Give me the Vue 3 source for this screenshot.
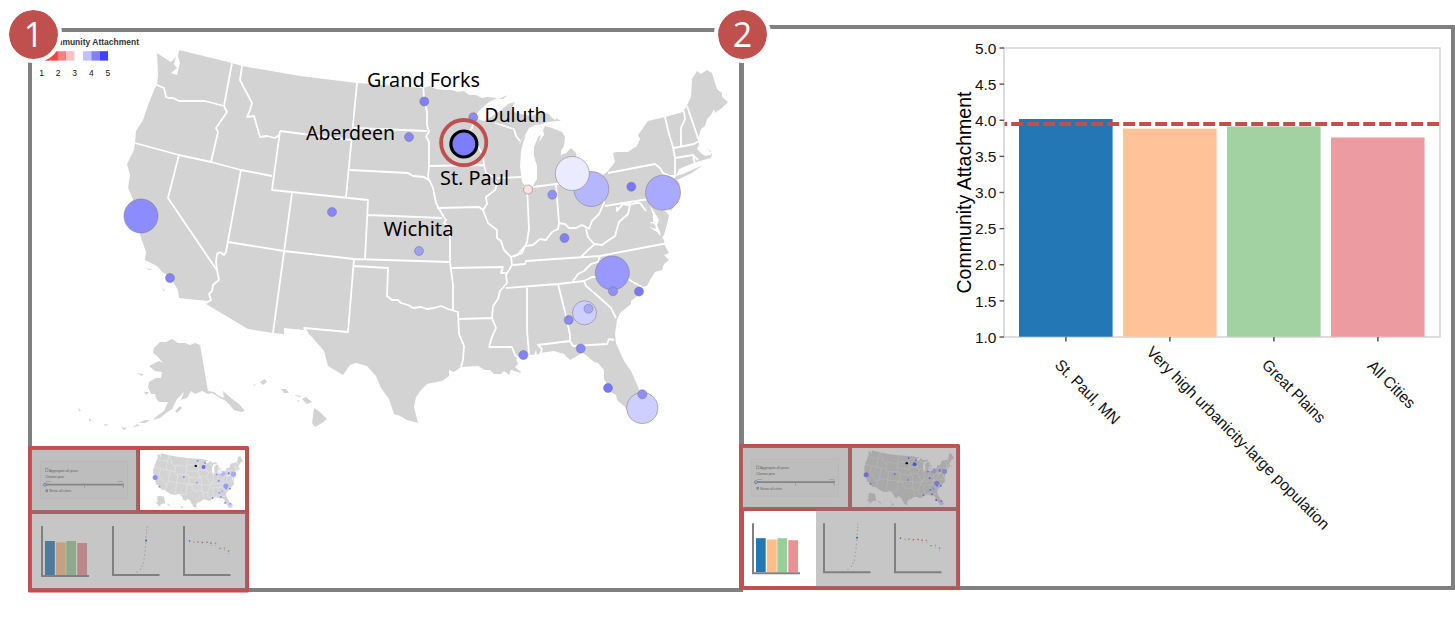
<script setup>
// Landmass outline in panel coordinates, clockwise from the Pacific Northwest.
const land = [
  'M157 53L163 57L171 62L176 57L174 64L177 68L171 73L177 75L180 63L178 56L179 50L232 63L242 66L300 76L357 83L423 88L430 86L436 89L445 90L452 90L458 92L464 91L469 95L476 95L482 98L487 97L497 98',
  'L489 102L480 110L473 118L484 121L491 117L500 111L508 104L515 102L511 109L514 112L525 115L532 116L540 112L549 114L551 117L557 121L548 122L542 124L535 125L529 128L525 135L520 142L519 145L523 138L526 135L523 143L521 151L520 166L522 182L525 187L532 187L537 179L537 166L534 156L534 147L538 137L541 135L539 142L544 135L543 130L545 126L552 128L562 132L565 137L564 146L561 151L561 155L566 153L571 148L576 153L577 163L581 171L588 174L596 180L608 171L615 162L613 153L616 152L628 152L637 146L640 139L638 135L648 121L665 117L683 112L686 107L691 97L692 79L697 71L701 74L707 70L712 73L717 89L722 93L722 97L728 102L722 108L719 110L715 113L714 109L711 115L707 119L705 126L701 129L698 139L699 145L697 149L702 154L705 156L711 155L711 151L708 149L712 154L711 158L700 161L691 164L679 169L676 176',
  'L683 174L703 165L692 173L677 180L680 184L679 190L675 205L671 211L667 208L664 204L665 211L669 215L667 224L664 235L661 239L660 232L657 225L659 220L655 213L650 206L653 215L653 222L649 222L655 225L656 229L649 227L657 232L664 240L665 246L669 253L664 255L669 260L664 264L662 270L655 272L650 280L647 286L641 287L637 296L631 301L631 304L620 313L617 320L616 327L615 334L616 343L619 350L624 361L631 371L636 382L641 394L646 408L644 416L637 417L627 411L625 407L617 400L616 395L609 391L607 384L604 379L604 370L598 363L594 362L586 355L582 353L570 360L564 354L554 351L540 353L537 355L536 350L534 355L525 354L516 359L518 364L515 367L522 373L514 371L511 370L509 375L504 371L501 374L494 374L490 370L485 370L478 366L461 367L454 372L449 370L449 376L442 381L427 384L421 390L416 397L414 407L418 423L407 420L400 416L394 414L389 399L381 388L376 376L367 366L356 363L350 365L343 375L328 366L324 351L312 337L304 330L284 328L284 334L273 333L248 329L206 304L208 301L179 298L178 290L170 277L162 272L157 266L145 260L146 252L139 232L131 215L133 199L128 188L130 175L127 164L134 150L135 143L136 131L143 120L148 105L155 88L157 85L158 75Z',
  'M154 348L160 342L166 342L172 339L178 343L185 343L190 345L195 343L200 345L208 391L214 392L219 396L224 398L223 391L231 398L239 404L245 411L241 412L234 410L226 401L220 398L212 393L208 394L202 391L195 394L191 391L187 398L181 400L184 392L177 399L172 409L166 413L160 418L153 420L157 416L164 411L168 402L159 402L156 398L155 394L151 394L148 387L149 382L156 378L161 378L162 372L155 371L149 366L159 361L163 363L157 356L153 353Z',
  'M175 411L180 406L182 408L177 413ZM144 392L149 392L146 395ZM137 373L143 374L142 376ZM139 423L145 420L150 420L145 423ZM132 427L138 424L139 426ZM121 427L127 428L124 430ZM112 427L117 428ZM104 424L109 425L105 426ZM89 418L92 421L89 421ZM78 407L81 411L79 411Z',
  'M260 382L265 379L267 382L263 385ZM253 385L256 384L254 386ZM281 389L286 389L289 393L284 393ZM294 395L302 396L299 397ZM302 399L306 397L312 402L307 404ZM297 400L300 401L298 402ZM314 408L320 412L327 419L322 423L315 427L312 423L313 416Z',
  'M146 268L150 269L153 270L149 270ZM162 288L165 291L163 291ZM499 99L508 95L503 99ZM556 118L561 121L556 121Z'
].join('')

// State boundaries, drawn as open strokes over the land.
const borders = [
  'M157 85L164 88L166 97L169 98L173 98L179 101L193 101L205 101L224 106M232 63L224 106L227 112L216 128L218 132L211 162',
  'M135 143L179 155L211 162L241 170L272 176M179 155L168 198L216 269M241 170L226 252L224 255L220 252L217 254L216 262L217 270L219 280L213 285L212 291L209 294L211 300L206 303',
  'M242 66L240 80L243 86L252 103L250 110L247 117L254 116L256 123L260 137L267 136L275 138L279 135M280 131L272 190L368 200L365 259M280 131L351 140M357 83L346 197M292 193L284 252L273 333M228 242L284 251L354 259L450 262M354 259L348 332L304 328L308 334',
  'M354 128L427 131M350 170L408 173L413 176L424 177L430 181M423 84L424 98L427 112L427 125L429 132L426 136L429 142L429 166L428 177L433 188L436 203L442 214L446 220L444 223L450 228L450 262L453 285L453 311M429 166L484 165M368 215L442 218M437 208L479 207L483 210',
  'M354 266L388 268L387 296L392 300L398 300L401 303L408 305L413 308L421 307L427 309L434 308L441 306L448 309L458 312L459 334L464 346L463 360L461 367M451 268L503 267L501 273L508 273M459 319L493 318',
  'M475 118L472 128L468 133L469 139L477 145L483 155L484 165L486 173L493 177L497 184L495 190L486 197L487 204L483 210L488 223L497 230L497 238L501 241L504 250L511 257L512 265L506 275L507 283L500 291L498 299L493 306L492 318L496 328L492 337L489 347L512 347L515 355L521 360',
  'M495 123L514 129L516 136L520 141M497 178L522 177M527 187L529 229L527 242L522 253L513 257M533 187L556 184L573 183M556 185L559 223M511 257L518 254L525 246L533 245L540 239L546 240L552 232L558 229L559 223L565 224L569 228L576 228L582 225L589 229L592 221L599 214L604 203L605 181M586 229L588 237L594 244L602 245L609 240L615 236L619 222L628 214L630 205L636 203L640 203L646 211M605 206L655 198M617 207L617 211L623 204L628 205L631 202M594 245L589 249L581 257',
  'M513 265L525 264L526 261L570 258L600 256L668 243M600 256L598 262L591 264L584 271L578 274L573 281M506 288L558 284L584 281L592 277L610 276L615 280L626 278L642 287M584 281L586 286L600 298L611 308L616 318M527 287L527 330L529 354M558 284L567 320L570 335L570 341L573 346L607 344L609 339L614 340M540 355L542 349L538 345L570 341',
  'M608 173L655 164L660 168L663 173L675 178M665 117L669 134L673 147L675 158L675 177M684 111L685 119L681 128L681 147M687 106L697 135L698 139M674 148L694 144L699 141M675 158L693 155L698 160M693 156L695 164M657 198L657 208L667 211M675 176L661 176'
].join('')

const cities = [
  [141, 216, 17, '#8c8cff'], [170, 278, 4.5, '#8383ff'], [332, 212, 4.5, '#8686fa'], [424.3, 101.5, 4.5, '#8080ff'],
  [409, 137, 4.5, '#8686ff'], [473.3, 117.3, 4.5, '#8b8bff'], [419, 251, 4.5, '#9e9efc'], [528, 189.5, 4.5, '#fce3e3'],
  [552.3, 194.7, 4.5, '#9090ff'], [564.5, 238, 4.5, '#8080ff'], [591.3, 189, 17.5, '#b6b6ff'], [572.3, 173.5, 17, '#ebebff'],
  [631.3, 186.7, 4.5, '#7676ff'], [663, 192.7, 17.5, '#a9a9ff'], [612.3, 273, 17, '#9898ff'], [613, 291.3, 4.5, '#9090fa'],
  [639, 291.5, 4.5, '#7878ff'], [584.5, 312.8, 12, '#ceceff'], [588.5, 308.7, 4.5, '#a9a9fa'], [568.7, 320, 4.5, '#8888ff'],
  [580.7, 348.5, 4.5, '#8888ff'], [523.4, 355, 4.5, '#8383ff'], [608, 388, 4.5, '#7676ff'], [642.3, 408, 15.7, '#cfcfff'], [642.3, 394.3, 4.5, '#9090fa']
]

const labels = [
  ['Grand Forks', 367, 86.5, 113], ['Duluth', 484.5, 121.5, 62], ['Aberdeen', 306, 139.5, 89],
  ['St. Paul', 440, 184.5, 69], ['Wichita', 383.5, 235.5, 70]
]

const swatches = ['#ff2020', '#ff4040', '#ff8080', '#ffc0c0', '#ffffff', '#c0c0ff', '#8080ff', '#4040ff']
const legendTicks = [1, 2, 3, 4, 5]

const yTicks = [5, 4.5, 4, 3.5, 3, 2.5, 2, 1.5, 1]
const yOf = v => 337 - (v - 1) * 72.25
const bars = [
  { x: 1019, top: 119, fill: '#2277b4', name: 'St. Paul, MN', tx: 1054, ty: 366, len: 84 },
  { x: 1123, top: 128.6, fill: '#ffc299', name: 'Very high urbanicity-large population', tx: 1145.5, ty: 353, len: 251 },
  { x: 1227, top: 126.4, fill: '#a3d2a2', name: 'Great Plains', tx: 1261, ty: 366, len: 82 },
  { x: 1331, top: 137.5, fill: '#ec9ba0', name: 'All Cities', tx: 1366.5, ty: 367, len: 60 }
]

// The two navigators share one drawing; only the highlighted cell differs.
const miniBars = [[45, 541, '#2277b4'], [56, 542.3, '#ffbe86'], [66.3, 541, '#96d096'], [77.3, 543, '#ec9094']]
const curve = [[147, 527], [146.7, 530], [146.5, 533], [146, 537], [145.8, 543], [145.4, 547], [145, 551], [144.7, 555], [144, 559], [143.3, 563], [142, 566], [140.6, 569], [137, 572]]
const scatter = [
  [189.5, 541, '#287aae'], [194, 542.3, '#d59252'], [198, 542, '#58a45c'], [202.4, 542.5, '#c6515a'], [207, 542.3, '#8a6d9c'],
  [211, 543, '#a1635c'], [215.5, 543.3, '#ce7390'], [220, 548.5, '#888'], [224.4, 548, '#aaa732'], [228.5, 551, '#38a8b2']
]
const scatterFaint = [[211.3, 545.5], [215.7, 545.5], [224.5, 550], [228.6, 553.5]]
</script>

<template>
  <main class="figure">
    <svg class="defs" width="0" height="0">
      <defs>
        <g id="states">
          <path :d="land" class="land" />
          <path :d="borders" class="borders" />
        </g>
        <g id="mini-settings">
          <rect x="40.5" y="461.5" width="87" height="37" fill="#bdbdbd" stroke="#b8b8b8" />
          <rect x="45.5" y="468.5" width="2.5" height="2.8" fill="none" stroke="#888" stroke-width=".6" />
          <text x="49" y="471.5" class="tiny" textLength="29">Aggregate all years</text>
          <text x="45" y="477.5" class="tiny" textLength="19">Choose year</text>
          <text x="46" y="482" class="tick-tiny">2008</text>
          <text x="118" y="482" class="tick-tiny">2010</text>
          <path d="M45 484.7H123.5" stroke="#858585" stroke-width="1.8" />
          <path d="M84.5 486V488M123.3 483V488" stroke="#8c8c8c" stroke-width=".7" />
          <circle cx="45" cy="484.7" r="1.5" fill="#9cb4c8" stroke="#467ba4" stroke-width=".7" />
          <rect x="45.5" y="489.3" width="2.5" height="2.8" fill="#888" />
          <text x="49" y="492.3" class="tiny" textLength="22">Show all cities</text>
        </g>
        <g id="mini-map" transform="translate(134 445.8) scale(.15 .147)">
          <use href="#states" />
          <circle v-for="(c, i) in cities" :key="i" :cx="c[0]" :cy="c[1]" :r="c[2] < 6 ? 6.5 : c[2]" :fill="c[3]" />
          <circle cx="412" cy="137" r="8" fill="#111122" />
          <circle cx="464" cy="144" r="13" fill="#6868ff" />
        </g>
        <g id="mini-charts">
          <rect v-for="b in miniBars" :key="b[0]" :x="b[0]" :y="b[1]" width="9.7" :height="575 - b[1]" :fill="b[2]" />
          <g fill="none" stroke="#808080" stroke-width="2">
            <path d="M42 526V576H89" />
            <path d="M113 526V575H159.5" />
            <path d="M184 526V575H230.5" />
          </g>
          <rect v-for="(p, i) in curve" :key="i" :x="p[0] - .5" :y="p[1] - .5" width="1" height="1.2" fill="#959595" />
          <rect x="145.2" y="539.6" width="1.8" height="1.8" fill="#356f98" />
          <rect v-for="(p, i) in scatter" :key="i" :x="p[0] - .7" :y="p[1] - .7" width="1.4" height="1.4" :fill="p[2]" />
          <rect v-for="(p, i) in scatterFaint" :key="i" :x="p[0] - .5" :y="p[1] - .5" width="1" height="1" fill="#a0a0a0" />
        </g>
      </defs>
    </svg>

    <section class="panel map-panel">
      <svg class="canvas" viewBox="32 32 707 556">
        <g class="legend">
          <text x="43.5" y="45" class="legend-title" textLength="95.5" lengthAdjust="spacingAndGlyphs">Community Attachment</text>
          <rect v-for="(c, i) in swatches" :key="i" :x="41.2 + i * 8.35" y="51.2" width="8.4" height="9.4" :fill="c" />
          <text v-for="(n, i) in legendTicks" :key="n" :x="41.5 + i * 16.6" y="76" class="legend-tick">{{ n }}</text>
        </g>
        <use href="#states" />
        <circle v-for="(c, i) in cities" :key="i" :cx="c[0]" :cy="c[1]" :r="c[2]" :fill="c[3]" class="city" />
        <circle cx="463.9" cy="144" r="13" fill="#7d7dff" stroke="#000" stroke-width="3.2" />
        <circle cx="463.7" cy="142.6" r="22.6" fill="none" stroke="#c0504d" stroke-width="3.8" />
        <text v-for="l in labels" :key="l[0]" :x="l[1]" :y="l[2]" :textLength="l[3]" lengthAdjust="spacingAndGlyphs" class="place">{{ l[0] }}</text>

        <g class="navigator">
          <rect x="28" y="446" width="221" height="146.5" rx="1.5" fill="#c0504d" />
          <rect x="31" y="449" width="107" height="63" fill="#a46466" />
          <rect x="31" y="512" width="215.5" height="77.5" fill="#a46466" />
          <rect x="32" y="450" width="104" height="60" fill="#bfbfbf" />
          <rect x="138" y="447" width="109" height="65" fill="#c0504d" />
          <rect x="140" y="450" width="105" height="60" fill="#fff" />
          <rect x="32" y="514" width="213" height="74" fill="#c6c6c6" />
          <use href="#mini-settings" />
          <use href="#mini-map" />
          <use href="#mini-charts" />
          <g class="dimmed-bars">
            <rect v-for="b in miniBars" :key="b[0]" :x="b[0]" :y="b[1]" width="9.7" :height="575 - b[1]" fill="#808080" />
          </g>
        </g>
      </svg>
      <div class="badge">1</div>
    </section>

    <section class="panel chart-panel">
      <svg class="canvas" viewBox="744 29 707 557">
        <rect x="1004" y="48" width="436" height="289" fill="#fff" stroke="#cfcfcf" stroke-width="1.4" />
        <rect v-for="b in bars" :key="b.name" :x="b.x" :y="b.top" width="93.6" :height="336.7 - b.top" :fill="b.fill" />
        <g v-for="t in yTicks" :key="t">
          <path :d="`M999.5 ${yOf(t)}H1004`" stroke="#555" stroke-width="1.4" />
          <text x="996.5" :y="yOf(t) + 5.7" class="y-label">{{ t.toFixed(1) }}</text>
        </g>
        <g v-for="b in bars" :key="b.name">
          <path :d="`M${b.x + 46.9} 337V341.5`" stroke="#555" stroke-width="1.5" />
          <text :transform="`translate(${b.tx} ${b.ty}) rotate(45)`" :textLength="b.len" lengthAdjust="spacingAndGlyphs" class="x-label">{{ b.name }}</text>
        </g>
        <path d="M1004.5 124H1440" stroke="#c0504d" stroke-width="3.8" stroke-dasharray="12 4" stroke-dashoffset="9.3" />
        <text transform="translate(971.3 293.5) rotate(-90)" textLength="202" lengthAdjust="spacingAndGlyphs" class="axis-title">Community Attachment</text>

        <g class="navigator">
          <rect x="739" y="444" width="221" height="146" rx="1.5" fill="#c0504d" />
          <rect x="741.5" y="446.5" width="216" height="64" fill="#a46466" />
          <rect x="816" y="508" width="141.5" height="79" fill="#a46466" />
          <rect x="741" y="509" width="75" height="3" fill="#c0504d" />
          <rect x="743" y="448" width="105" height="59" fill="#bfbfbf" />
          <rect x="852" y="448" width="104" height="59" fill="#c6c6c6" />
          <rect x="744" y="511" width="72" height="75" fill="#fff" />
          <rect x="816" y="511" width="140" height="75" fill="#c6c6c6" />
          <use href="#mini-settings" transform="translate(711 -2.5)" />
          <g class="dimmed-map">
            <use href="#mini-map" transform="translate(711 -2.8)" />
          </g>
          <use href="#mini-charts" transform="translate(711 -2.8)" />
        </g>
      </svg>
      <div class="badge">2</div>
    </section>
  </main>
</template>

<style>
body { margin: 0; background: #fff; }
</style>

<style scoped>
.figure { display: flex; align-items: flex-start; width: 1455px; height: 617px; overflow: hidden; background: #fff; }
.defs { position: absolute; }
.panel { position: relative; box-sizing: border-box; flex: none; border: 4px solid #808080; }
.map-panel { width: 715px; height: 564px; margin: 28px 0 0 28px; }
.chart-panel { width: 715px; height: 565px; margin: 25px 0 0 -3px; }
.canvas { display: block; width: 100%; height: 100%; overflow: visible; }
.badge {
  position: absolute; display: flex; align-items: center; justify-content: center;
  width: 49px; height: 49px; border: 4px solid #fff; border-radius: 50%;
  background: #c0504d; background-clip: padding-box; color: #fff;
  font: 34px/49px "Open Sans", "Noto Sans", sans-serif;
}
.map-panel .badge { left: -27px; top: -26px; }
.chart-panel .badge { left: -30px; top: -23px; }
.land { fill: #d3d3d3; }
.borders { fill: none; stroke: #fff; stroke-width: 1.8; stroke-linejoin: round; }
.city { stroke: #777; stroke-opacity: .5; stroke-width: 1; }
.place { font: 20.5px "Noto Sans", "Open Sans", sans-serif; fill: #000; }
.legend-title { font: bold 9px "Liberation Sans", Arial, sans-serif; fill: #333; }
.legend-tick { font: 8.5px "Liberation Sans", Arial, sans-serif; fill: #111; text-anchor: middle; }
.y-label { font: 15.5px "Liberation Sans", Arial, sans-serif; fill: #111; text-anchor: end; }
.x-label { font: 16px "Liberation Sans", Arial, sans-serif; fill: #111; }
.axis-title { font: 20px "Liberation Sans", Arial, sans-serif; fill: #000; }
.tiny { font: 3.6px "Liberation Sans", Arial, sans-serif; fill: #666; }
.tick-tiny { font: 2.3px "Liberation Sans", Arial, sans-serif; fill: #777; }
.dimmed-bars { opacity: .45; }
.dimmed-map { filter: brightness(.8); }
</style>
